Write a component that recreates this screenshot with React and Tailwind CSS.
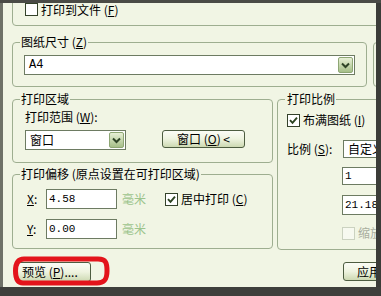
function Check({ checked, disabled, className = '' }) {
  return (
    <span
      className={`flex h-[13px] w-[13px] shrink-0 items-center justify-center border ${
        disabled ? 'border-[#cbd2c0] bg-[#f7f9f0]' : 'border-[#34422a] bg-white'
      } ${className}`}
    >
      {checked && (
        <svg width="9" height="9" viewBox="0 0 9 9">
          <path d="M1 4.2 L3.5 6.8 L8 1.6" fill="none" stroke="#2c4320" strokeWidth="1.9" />
        </svg>
      )}
    </span>
  );
}

function DropBtn() {
  return (
    <span className="flex h-[16px] w-[15px] shrink-0 items-center justify-center rounded-[2px] border border-[#8ea674] bg-linear-to-b from-[#e8f0d6] to-[#a6bf88]">
      <svg width="9" height="7" viewBox="0 0 9 7">
        <path d="M1 1.5 L4.5 5 L8 1.5" fill="none" stroke="#2f4427" strokeWidth="2" />
      </svg>
    </span>
  );
}

function Select({ value, className = '' }) {
  return (
    <div className={`flex shrink-0 items-center justify-between border border-[#6d7b62] bg-white pl-[4px] pr-[1px] ${className}`}>
      <span className="whitespace-nowrap">{value}</span>
      <DropBtn />
    </div>
  );
}

function Input({ value, className = '' }) {
  return (
    <div className={`flex shrink-0 items-center border border-[#6d7b62] bg-white pl-[2px] font-['Liberation_Mono',monospace] text-[11px] ${className}`}>
      {value}
    </div>
  );
}

function Button({ children, className = '' }) {
  return (
    <div className={`flex shrink-0 items-center rounded-[3px] border border-[#4d5c40] bg-linear-to-b from-[#fbfcf6] via-[#eef3df] to-[#cdd9b2] whitespace-nowrap ${className}`}>
      {children}
    </div>
  );
}

function Legend({ children }) {
  return (
    <span className="absolute left-[7px] top-[-8px] whitespace-nowrap bg-[#f1f5e4] px-[1px]">{children}</span>
  );
}

export default function App() {
  return (
    <div className="flex h-[296px] w-[381px] flex-col overflow-hidden bg-[#3e3f3b] font-['Noto_Sans_CJK_SC',sans-serif] text-[12px] leading-[14px] text-black">
      <div className="h-[3px] shrink-0 bg-[#4a4b46]" />
      <div className="flex h-[284px] shrink-0">
        <div className="w-[3px] shrink-0 bg-[#6e7167]" />
        <div className="relative flex w-[373px] shrink-0 flex-col overflow-hidden bg-[#f1f5e4]">
          {/* 打印到文件 */}
          <div className="ml-[9px] mt-[-12px] flex h-[35px] w-[420px] shrink-0 items-start rounded-[4px] border border-[#9eae90] pl-[12px] pt-[11px]">
            <Check />
            <span className="ml-[3px]">
              打印到文件 (<u>F</u>)
            </span>
          </div>

          {/* 图纸尺寸 */}
          <div className="mt-[16px] flex shrink-0">
            <div className="relative ml-[9px] h-[45px] w-[355px] shrink-0 rounded-[4px] border border-[#9eae90] pl-[11px] pt-[12px]">
              <Legend>
                图纸尺寸 (<u>Z</u>)
              </Legend>
              <Select value="A4" className="h-[20px] w-[331px] font-['Liberation_Mono',monospace]" />
            </div>
            <div className="ml-[6px] h-[45px] w-[40px] shrink-0 rounded-[4px] border border-[#9eae90]" />
          </div>

          <div className="mt-[12px] flex shrink-0">
            <div className="ml-[9px] flex w-[261px] shrink-0 flex-col gap-[11px]">
              {/* 打印区域 */}
              <div className="relative h-[64px] rounded-[4px] border border-[#9eae90] pl-[12px] pt-[10px]">
                <Legend>打印区域</Legend>
                <div>
                  打印范围 (<u>W</u>):
                </div>
                <div className="mt-[6px] flex items-start">
                  <Select value="窗口" className="h-[20px] w-[101px]" />
                  <Button className="ml-[36px] h-[18px] w-[83px] justify-center">
                    窗口 (<u>O</u>) &lt;
                  </Button>
                </div>
              </div>

              {/* 打印偏移 */}
              <div className="relative h-[75px] rounded-[4px] border border-[#9eae90] pl-[14px] pt-[14px]">
                <Legend>打印偏移 (原点设置在可打印区域)</Legend>
                <div className="flex items-center">
                  <span className="w-[19px] shrink-0">
                    <u>X</u>:
                  </span>
                  <Input value="4.58" className="h-[20px] w-[71px]" />
                  <span className="ml-[5px] text-[#9cc48c]">毫米</span>
                  <Check checked className="ml-[19px]" />
                  <span className="ml-[3px]">
                    居中打印 (<u>C</u>)
                  </span>
                </div>
                <div className="mt-[10px] flex items-center">
                  <span className="w-[19px] shrink-0">
                    <u>Y</u>:
                  </span>
                  <Input value="0.00" className="h-[20px] w-[71px]" />
                  <span className="ml-[5px] text-[#9cc48c]">毫米</span>
                </div>
              </div>
            </div>

            {/* 打印比例 */}
            <div className="relative ml-[4px] h-[151px] w-[150px] shrink-0 rounded-[4px] border border-[#9eae90] pl-[9px] pt-[13px]">
              <Legend>
                <span className="ml-[1px]">打印比例</span>
              </Legend>
              <div className="flex h-[14px] items-center">
                <Check checked />
                <span className="ml-[3px] whitespace-nowrap">
                  布满图纸 (<u>I</u>)
                </span>
              </div>
              <div className="mt-[13px] flex items-center">
                <span className="w-[56px] shrink-0 whitespace-nowrap">
                  比例 (<u>S</u>):
                </span>
                <Select value="自定义" className="h-[18px] w-[100px]" />
              </div>
              <Input value="1" className="ml-[55px] mt-[9px] h-[18px] w-[100px]" />
              <Input value="21.18" className="ml-[55px] mt-[10px] h-[20px] w-[100px]" />
              <div className="ml-[55px] mt-[11px] flex items-center">
                <Check disabled />
                <span className="ml-[3px] whitespace-nowrap text-[#a9ae9f]">缩放线宽</span>
              </div>
            </div>
          </div>

          <div className="mt-[12px] flex shrink-0">
            <Button className="ml-[12px] h-[20px] w-[76px] justify-start pl-[6px]">
              预览 (<u>P</u>)....
            </Button>
            <Button className="ml-[252px] h-[19px] w-[70px] justify-center">
              应用 (<u>A</u>)
            </Button>
          </div>

          <svg className="pointer-events-none absolute left-[7px] top-[251px]" width="100" height="34" viewBox="0 0 100 34">
            <path
              d="M14 5 H88 C96 5 97 9 97 17 C97 26 94 29 87 29 H13 C7 29 5.5 24 5.5 17 C5.5 10 8 5 14 5 Z"
              fill="none"
              stroke="#e3141b"
              strokeWidth="5"
            />
          </svg>
        </div>
        <div className="w-[5px] shrink-0 bg-[#3b3c38]" />
      </div>
    </div>
  );
}
